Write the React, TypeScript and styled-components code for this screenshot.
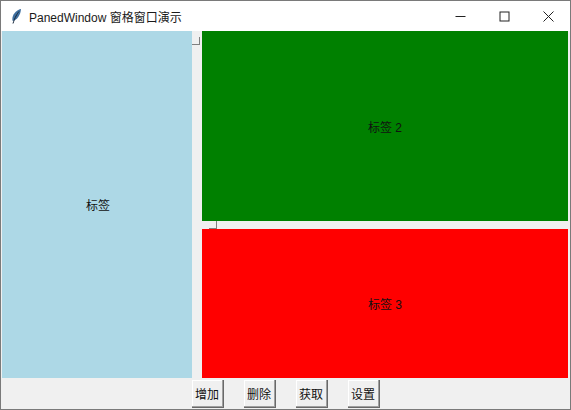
import React from "react";
import styled, { createGlobalStyle } from "styled-components";

const Global = createGlobalStyle`
  html, body { margin: 0; padding: 0; background: #f0f0f0; }
  #root { width: 571px; height: 410px; }
`;

const Win = styled.div`
  width: 571px;
  height: 410px;
  box-sizing: border-box;
  border: 1px solid #7a7a7a;
  background: #f0f0f0;
  display: flex;
  flex-direction: column;
  font-family: "Liberation Sans", "Noto Sans CJK SC", sans-serif;
  overflow: hidden;
`;

const TitleBar = styled.div`
  height: 30px;
  flex: none;
  background: #fff;
  display: flex;
  align-items: center;
  padding-left: 9px;
`;

const Title = styled.span`
  font-size: 12px;
  color: #1a1a1a;
  margin-left: 7px;
  white-space: nowrap;
  flex: 1;
`;

const WinButton = styled.div`
  width: 44px;
  height: 29px;
  display: flex;
  align-items: center;
  justify-content: center;
`;

const Panes = styled.div`
  height: 347px;
  flex: none;
  display: flex;
  padding: 0 1px;
`;

const Pane = styled.div<{ $bg: string; $h?: number }>`
  background: ${(p) => p.$bg};
  display: flex;
  align-items: center;
  justify-content: center;
  font-size: 12px;
  color: #111;
  height: ${(p) => (p.$h ? `${p.$h}px` : "100%")};
`;

const LeftPane = styled(Pane)`
  width: 190px;
  flex: none;
  box-sizing: border-box;
  padding-left: 2px;
`;

const VSash = styled.div`
  width: 10px;
  flex: none;
  position: relative;
`;

const RightCol = styled.div`
  width: 366px;
  flex: none;
  display: flex;
  flex-direction: column;
`;

const HSash = styled.div`
  height: 8px;
  flex: none;
  position: relative;
`;

const Handle = styled.div<{ $l: number; $t: number }>`
  position: absolute;
  left: ${(p) => p.$l}px;
  top: ${(p) => p.$t}px;
  width: 8px;
  height: 8px;
  box-sizing: border-box;
  background: #f0f0f0;
  border-right: 1px solid #808080;
  border-bottom: 1px solid #808080;
`;

const ToolBar = styled.div`
  flex: 1;
  display: flex;
  justify-content: center;
  align-items: flex-start;
  gap: 20px;
  padding-top: 2px;
`;

const Btn = styled.div`
  width: 32px;
  height: 28px;
  box-sizing: border-box;
  background: #f0f0f0;
  border-right: 1px solid #696969;
  border-bottom: 1px solid #696969;
  box-shadow: inset -1px -1px 0 #a0a0a0, inset 1px 1px 0 #fff;
  font-size: 12px;
  color: #111;
  display: flex;
  align-items: center;
  justify-content: center;
`;

const Feather = () => (
  <svg width="12" height="17" viewBox="0 0 12 17">
    <path d="M11 1C7.5 1.5 3.5 5 2.5 9.5c-.3 1.5-.2 2.7.2 3.6C6.5 12 10.5 8 11 1z" fill="#3f6f9f" />
    <path d="M9 3.5C7 6 5 9 3 15.5" stroke="#16263a" strokeWidth="1" fill="none" />
  </svg>
);

export default function App() {
  return (
    <Win>
      <Global />
      <TitleBar>
        <Feather />
        <Title>PanedWindow 窗格窗口演示</Title>
        <WinButton>
          <svg width="11" height="11" viewBox="0 0 11 11"><path d="M0.5 5.5h10" stroke="#222" fill="none" /></svg>
        </WinButton>
        <WinButton>
          <svg width="11" height="11" viewBox="0 0 11 11"><rect x="1" y="1" width="9" height="9" stroke="#222" fill="none" /></svg>
        </WinButton>
        <WinButton>
          <svg width="11" height="11" viewBox="0 0 11 11"><path d="M0.5 0.5l10 10M10.5 0.5l-10 10" stroke="#222" fill="none" /></svg>
        </WinButton>
      </TitleBar>
      <Panes>
        <LeftPane $bg="#add8e6">标签</LeftPane>
        <VSash><Handle $l={0} $t={6} /></VSash>
        <RightCol>
          <Pane $bg="#008000" $h={190}>标签 2</Pane>
          <HSash><Handle $l={7} $t={0} /></HSash>
          <Pane $bg="#ff0000" $h={149}>标签 3</Pane>
        </RightCol>
      </Panes>
      <ToolBar>
        <Btn>增加</Btn>
        <Btn>删除</Btn>
        <Btn>获取</Btn>
        <Btn>设置</Btn>
      </ToolBar>
    </Win>
  );
}
